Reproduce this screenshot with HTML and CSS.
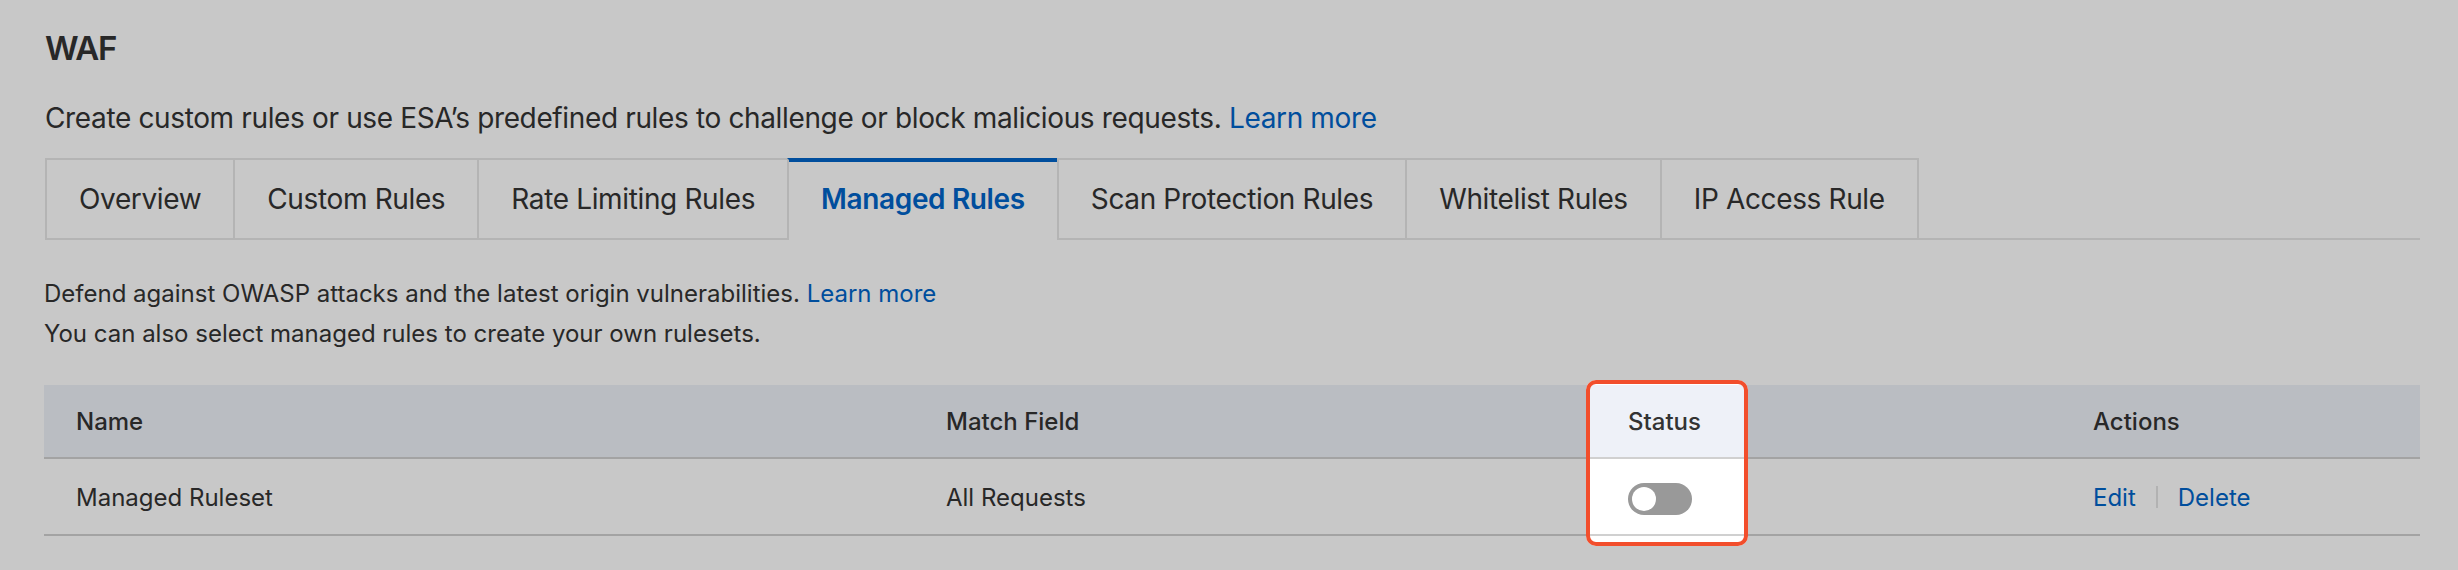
FILE: index.html
```html
<!DOCTYPE html>
<html lang="en">
<head>
<meta charset="utf-8">
<title>WAF - Managed Rules</title>
<link rel="stylesheet" href="styles.css">
</head>
<body>
<div class="page">
  <h1 class="title">WAF</h1>
  <p class="intro">Create custom rules or use ESA’s predefined rules to challenge or block malicious requests. <a class="link" href="#">Learn more</a></p>
  <nav class="tabs">
    <div class="tab">Overview</div>
    <div class="tab">Custom Rules</div>
    <div class="tab">Rate Limiting Rules</div>
    <div class="tab active">Managed Rules</div>
    <div class="tab">Scan Protection Rules</div>
    <div class="tab">Whitelist Rules</div>
    <div class="tab">IP Access Rule</div>
  </nav>
  <div class="desc">
    <p>Defend against OWASP attacks and the latest origin vulnerabilities. <a class="link" href="#">Learn more</a></p>
    <p>You can also select managed rules to create your own rulesets.</p>
  </div>
  <div class="table-wrap">
    <div class="table">
      <div class="row head">
        <div class="cell">Name</div>
        <div class="cell">Match Field</div>
        <div class="cell">Status</div>
        <div class="cell">Actions</div>
      </div>
      <div class="row body">
        <div class="cell">Managed Ruleset</div>
        <div class="cell">All Requests</div>
        <div class="cell"><span class="switch"><span class="knob"></span></span></div>
        <div class="cell actions"><a class="link" href="#">Edit</a><span class="sep"></span><a class="link" href="#">Delete</a></div>
      </div>
    </div>
    <div class="spotlight"></div>
  </div>
</div>
</body>
</html>
```

FILE: styles.css
```css
* { box-sizing: border-box; margin: 0; padding: 0; }
html, body { background: #ffffff; }
body {
  font-family: Inter, "Noto Sans", sans-serif;
  color: #333333;
}
.page {
  padding: 28px 38px 0 44px;
  min-height: 570px;
}
.link { color: #0064c8; text-decoration: none; }

.title {
  font-size: 33px;
  font-weight: 600;
  line-height: 40px;
  letter-spacing: -1.2px;
  margin-left: 1px;
}
.intro {
  font-size: 28px;
  line-height: 40px;
  letter-spacing: -0.36px;
  margin-top: 30px;
  margin-left: 1px;
}

.tabs {
  display: flex;
  margin-top: 20px;
  margin-left: 1px;
  border-bottom: 2px solid #e6e6e6;
}
.tab {
  height: 80px;
  display: flex;
  align-items: center;
  padding: 0 32px;
  border: 2px solid #e6e6e6;
  border-bottom: none;
  margin-left: -2px;
  font-size: 28px;
  letter-spacing: -0.36px;
  background: #ffffff;
}
.tab:first-child { margin-left: 0; }
.tab.active {
  color: #0064c8;
  font-weight: 600;
  border-top-color: #0064c8;
  box-shadow: inset 0 2px 0 #0064c8;
  height: 82px;
  margin-bottom: -2px;
  padding-bottom: 2px;
}

.desc {
  margin-top: 34px;
  font-size: 24px;
  line-height: 40px;
}

.table-wrap {
  position: relative;
  margin-top: 31px;
}
.row {
  display: grid;
  grid-template-columns: 870px 682px 465px 1fr;
  border-bottom: 2px solid #d0d0d0;
}
.head {
  height: 74px;
  background: #eef1f8;
  font-weight: 500;
}
.body { height: 77px; }
.cell {
  display: flex;
  align-items: center;
  padding-left: 32px;
  font-size: 24px;
}
.head .cell { padding-top: 1px; }
.body .cell { padding-top: 1px; }

.switch {
  display: flex;
  align-items: center;
  width: 64px;
  height: 32px;
  padding: 0 4px;
  border-radius: 16px;
  background: #999999;
  margin-top: 4px;
}
.knob {
  width: 24px;
  height: 24px;
  border-radius: 50%;
  background: #ffffff;
}

.actions .sep {
  width: 2px;
  height: 22px;
  background: #e3e3e3;
  margin: 0 20px;
}

.spotlight {
  position: absolute;
  left: 1542px;
  top: -5px;
  width: 162px;
  height: 166px;
  border: 4px solid #f24e2c;
  border-radius: 10px;
  box-shadow: 0 0 0 4000px rgba(0, 0, 0, 0.216);
  pointer-events: none;
}
```
